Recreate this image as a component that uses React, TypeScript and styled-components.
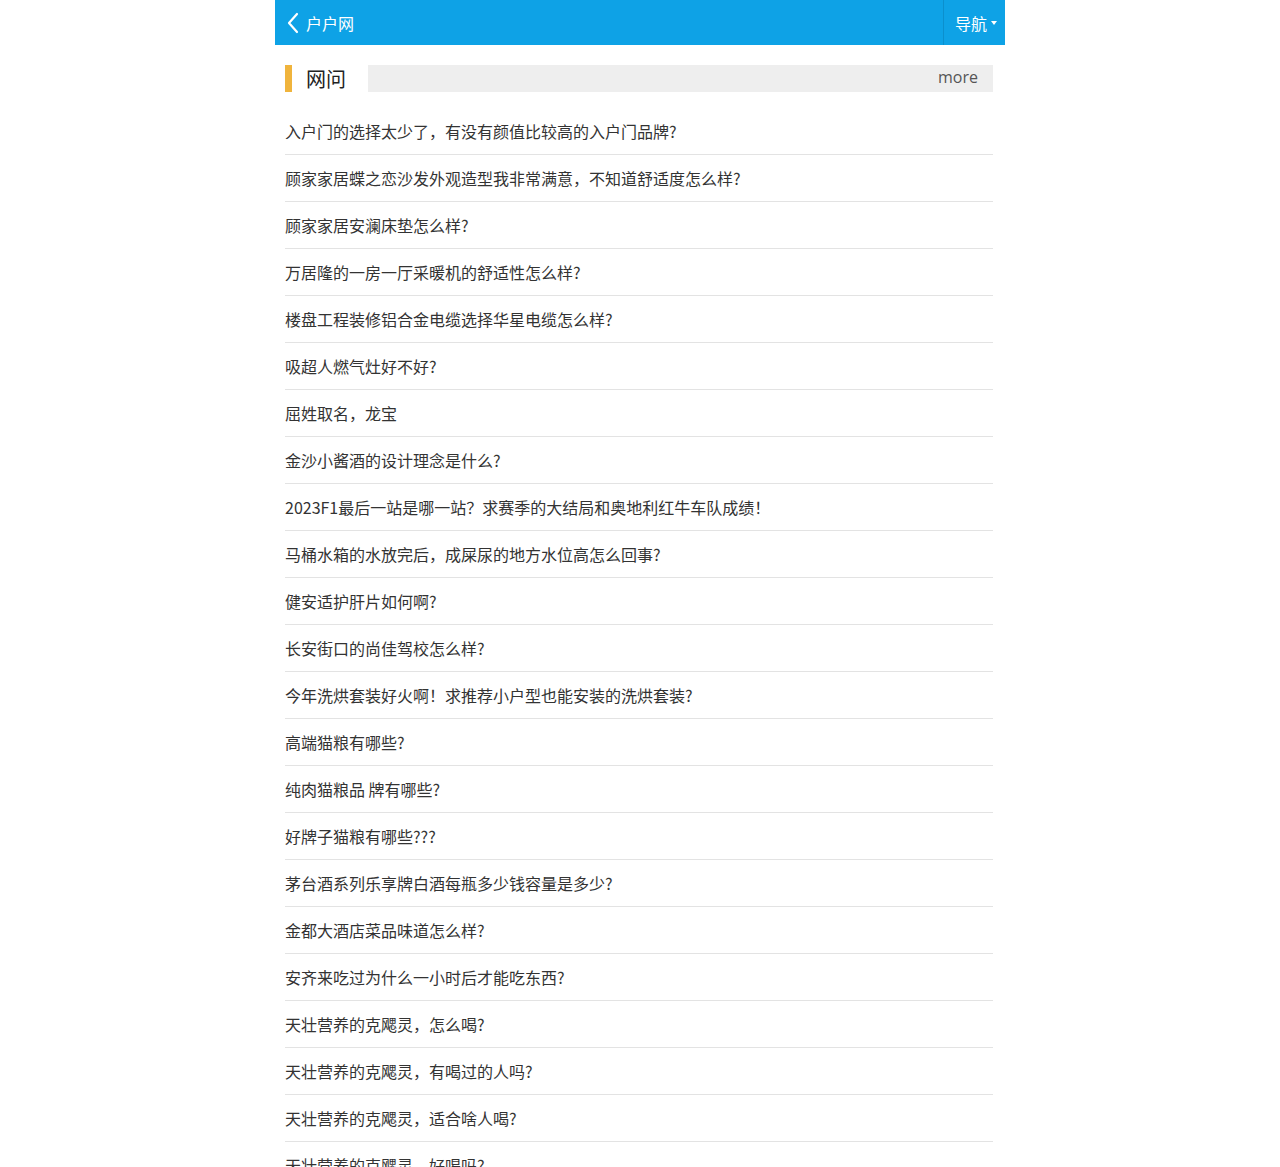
import React from 'react';
import styled, { createGlobalStyle } from 'styled-components';

const GlobalStyle = createGlobalStyle`
  html, body {
    margin: 0;
    padding: 0;
    background: #fff;
  }
  body {
    font-family: "Noto Sans CJK SC", "Liberation Sans", sans-serif;
    color: #333;
  }
`;

const Page = styled.div`
  width: 730px;
  margin: 0 auto;
  background: #fff;
`;

const Header = styled.header`
  display: flex;
  align-items: stretch;
  height: 45px;
  background: #0ea2e6;
  color: #fff;
`;

const BackLink = styled.a`
  display: flex;
  align-items: center;
  gap: 6px;
  padding-left: 11px;
  flex: 1;
  color: #fff;
  font-size: 16px;
  text-decoration: none;
  svg {
    display: block;
  }
`;

const NavButton = styled.div`
  display: flex;
  align-items: center;
  gap: 4px;
  padding: 0 8px 0 11px;
  border-left: 1px solid #0b8fcd;
  font-size: 16px;
`;

const Caret = styled.span`
  width: 0;
  height: 0;
  border-left: 3px solid transparent;
  border-right: 3px solid transparent;
  border-top: 4px solid #fff;
`;

const Section = styled.section`
  padding: 20px 12px 0 10px;
`;

const SectionHead = styled.div`
  display: flex;
  align-items: stretch;
  height: 27px;
`;

const Title = styled.h2`
  margin: 0;
  display: flex;
  align-items: center;
  width: 83px;
  box-sizing: border-box;
  padding-left: 14px;
  border-left: 7px solid #f0b43c;
  font-size: 20px;
  font-weight: 400;
  color: #222;
`;

const MoreBar = styled.div`
  flex: 1;
  display: flex;
  justify-content: flex-end;
  align-items: center;
  padding-right: 15px;
  background: #eeeeee;
  font-family: "Open Sans", "Liberation Sans", sans-serif;
  font-size: 16px;
  color: #555;
  line-height: 1;
  padding-bottom: 3px;
  box-sizing: border-box;
`;

const List = styled.ul`
  list-style: none;
  margin: 16px 0 0;
  padding: 0;
`;

const Item = styled.li`
  height: 46px;
  display: flex;
  align-items: center;
  border-bottom: 1px solid #e3e3e3;
  font-size: 16px;
  color: #333;
  white-space: nowrap;
  overflow: hidden;
`;

const questions = [
  '入户门的选择太少了，有没有颜值比较高的入户门品牌?',
  '顾家家居蝶之恋沙发外观造型我非常满意，不知道舒适度怎么样?',
  '顾家家居安澜床垫怎么样?',
  '万居隆的一房一厅采暖机的舒适性怎么样?',
  '楼盘工程装修铝合金电缆选择华星电缆怎么样?',
  '吸超人燃气灶好不好?',
  '屈姓取名，龙宝',
  '金沙小酱酒的设计理念是什么?',
  '2023F1最后一站是哪一站？求赛季的大结局和奥地利红牛车队成绩！',
  '马桶水箱的水放完后，成屎尿的地方水位高怎么回事?',
  '健安适护肝片如何啊?',
  '长安街口的尚佳驾校怎么样?',
  '今年洗烘套装好火啊！求推荐小户型也能安装的洗烘套装?',
  '高端猫粮有哪些?',
  '纯肉猫粮品 牌有哪些?',
  '好牌子猫粮有哪些???',
  '茅台酒系列乐享牌白酒每瓶多少钱容量是多少?',
  '金都大酒店菜品味道怎么样?',
  '安齐来吃过为什么一小时后才能吃东西?',
  '天壮营养的克飔灵，怎么喝?',
  '天壮营养的克飔灵，有喝过的人吗?',
  '天壮营养的克飔灵，适合啥人喝?',
  '天壮营养的克飔灵，好喝吗?',
];

export default function App() {
  return (
    <>
      <GlobalStyle />
      <Page>
        <Header>
          <BackLink href="#">
            <svg width="14" height="22" viewBox="0 0 14 22" fill="none">
              <path d="M11 2 L3 11 L11 20" stroke="#fff" strokeWidth="2.2" strokeLinecap="round" strokeLinejoin="round" />
            </svg>
            户户网
          </BackLink>
          <NavButton>
            导航
            <Caret />
          </NavButton>
        </Header>
        <Section>
          <SectionHead>
            <Title>网问</Title>
            <MoreBar>more</MoreBar>
          </SectionHead>
          <List>
            {questions.map((q) => (
              <Item key={q}>{q}</Item>
            ))}
          </List>
        </Section>
      </Page>
    </>
  );
}
